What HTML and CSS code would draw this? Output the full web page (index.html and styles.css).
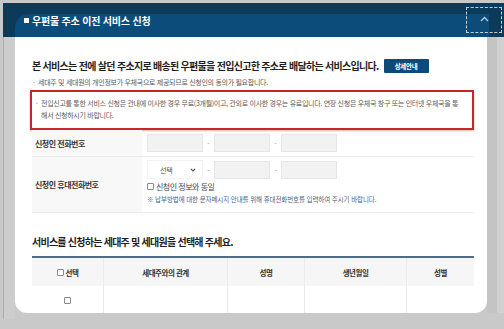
FILE: index.html
```html
<!DOCTYPE html>
<html lang="ko">
<head>
<meta charset="UTF-8">
<title>우편물 주소 이전 서비스 신청</title>
<link rel="stylesheet" href="styles.css">
</head>
<body>
	<header class="topbar">
		<div class="panel">
			<h1 class="title"><span class="sq"></span>우편물 주소 이전 서비스 신청</h1>
		</div>
		<button class="toggle" type="button">
			<svg width="9" height="6" viewBox="0 0 9 6"><path d="M1 5 L4.5 1.5 L8 5" fill="none" stroke="#b9c9d8" stroke-width="1.3"/></svg>
		</button>
	</header>

	<div class="main">
		<div class="rail"></div>
		<div class="card">
			<div class="intro">
				<h2 class="lead">본 서비스는 전에 살던 주소지로 배송된 우편물을 전입신고한 주소로 배달하는 서비스입니다.</h2>
				<a class="btn" href="#">상세안내</a>
			</div>
			<ul class="notes">
				<li>세대주 및 세대원의 개인정보가 우체국으로 제공되므로 신청인의 동의가 필요합니다.</li>
			</ul>
			<ul class="notes warn">
				<li>전입신고를 통한 서비스 신청은 관내에 이사한 경우 무료(3개월)이고, 관외로 이사한 경우는 유료입니다. 연장 신청은 우체국 창구 또는 인터넷 우체국을 통해서 신청하시기 바랍니다.</li>
			</ul>

			<div class="form">
				<div class="row">
					<div class="label">신청인 전화번호</div>
					<div class="value">
						<div class="phone">
							<span class="field"></span><span class="dash">-</span>
							<span class="field"></span><span class="dash">-</span>
							<span class="field"></span>
						</div>
					</div>
				</div>
				<div class="row tall">
					<div class="label">신청인 휴대전화번호</div>
					<div class="value">
						<div class="phone">
							<span class="select">선택<svg width="6" height="4" viewBox="0 0 6 4"><path d="M0.8 0.8 L3 3 L5.2 0.8" fill="none" stroke="#555" stroke-width="1.1"/></svg></span><span class="dash">-</span>
							<span class="field"></span><span class="dash">-</span>
							<span class="field"></span>
						</div>
						<label class="check"><span class="box"></span>신청인 정보와 동일</label>
						<p class="hint">※ 납부방법에 대한 문자메시지 안내를 위해 휴대전화번호를 입력하여 주시기 바랍니다.</p>
					</div>
				</div>
			</div>

			<h3 class="sub">서비스를 신청하는 세대주 및 세대원을 선택해 주세요.</h3>
			<div class="members">
				<div class="th"><span class="box"></span>선택</div>
				<div class="th">세대주와의 관계</div>
				<div class="th">성명</div>
				<div class="th">생년월일</div>
				<div class="th">성별</div>
				<div class="td"><span class="box"></span></div>
				<div class="td"></div>
				<div class="td"></div>
				<div class="td"></div>
				<div class="td"></div>
			</div>
		</div>
		<div class="side"></div>
	</div>
</body>
</html>
```

FILE: styles.css
```css
* { padding: 0; margin: 0; box-sizing: border-box; }
li { list-style: none; }

body { background: #c9c9c9; font-family: "Noto Sans CJK KR", "Noto Sans", sans-serif; color: #222; width: 504px; height: 329px; overflow: hidden; }

/* 상단 타이틀 */
.topbar { position: relative; height: 37px; margin-left: 3px; border-top: 3px solid #c9c9c9; background: #0c3a5b; padding: 11px 15px 0 12px; }
.panel { height: 23px; background: #0b4c7b; border-top-left-radius: 14px; padding: 1px 0 0 9px; }
.title { display: flex; align-items: center; gap: 3px; font-size: 10px; line-height: 11px; color: #fff; font-weight: bold; letter-spacing: -0.2px; }
.sq { width: 5px; height: 5px; background: #fff; }
.toggle { position: absolute; left: 463px; top: 4px; width: 36px; height: 26px; background: transparent; border: 1px dashed rgba(255,255,255,0.75); display: flex; align-items: center; justify-content: center; padding-bottom: 2px; }

.main { display: flex; margin-left: 3px; }
.rail { width: 12px; height: 282px; border-left: 1px solid #adadad; background: #cdcdcd; }
.card { width: 472px; height: 276px; background: #fff; border-radius: 0 0 12px 12px; overflow: hidden; padding: 0 13px 0 17px; }
.side { width: 17px; height: 276px; border-left: 10px solid #c4c4c4; background: #d0d0d0; }

/* 안내 */
.intro { display: flex; align-items: center; gap: 5px; margin-top: 22px; height: 14px; }
.lead { font-size: 10px; letter-spacing: -0.7px; line-height: 14px; font-weight: bold; color: #1e1e1e; }
.btn { display: block; width: 45px; height: 14px; background: #0c4a7a; border-radius: 1px; color: #fff; font-size: 6.5px; font-weight: bold; text-decoration: none; text-align: center; line-height: 14px; letter-spacing: -0.3px; }

.notes { margin-top: 3px; font-size: 7px; letter-spacing: -0.3px; line-height: 12px; color: #5a5a5a; word-break: break-all; }
.notes li { padding-left: 6px; position: relative; }
.notes li:before { content: "·"; position: absolute; left: 1px; top: 0; color: #888; }
.warn { margin: 2px 0 0 -2px; width: 444px; height: 40px; border: 2px solid #c8262d; padding: 5px 8px 0 3px; box-shadow: 0 1px 2px rgba(120,0,0,0.3); }

/* 신청인 정보 */
.form { width: 442px; }
.row { display: grid; grid-template-columns: 110px 1fr; height: 27px; border-bottom: 1px solid #ececec; }
.row.tall { height: 56px; }
.label { background: #f8f8f8; padding-left: 3px; display: flex; align-items: center; font-size: 8px; font-weight: bold; letter-spacing: -0.5px; color: #333; }
.value { padding: 4px 0 0 5px; }
.tall .value { padding-top: 3px; }
.phone { display: flex; align-items: center; gap: 4px; }
.field { width: 56px; height: 18px; background: #f2f2f2; border: 1px solid #e6e6e6; }
.dash { width: 3px; font-size: 7px; color: #999; text-align: center; }
.select { width: 56px; height: 19px; display: flex; align-items: center; justify-content: space-between; padding: 0 6px 0 12px; font-size: 7px; color: #555; letter-spacing: -0.3px; border: 1px solid #f2f2f2; }
.check { display: flex; align-items: center; gap: 2px; margin-top: 2px; font-size: 8px; letter-spacing: -0.5px; color: #444; line-height: 11px; }
.box { width: 7px; height: 7px; border: 1px solid #8a8a8a; border-radius: 1px; background: #fff; }
.hint { margin-top: 2px; font-size: 6.5px; letter-spacing: -0.1px; color: #4f6079; line-height: 10px; }

/* 세대원 선택 */
.sub { margin-top: 22px; font-size: 10px; letter-spacing: -0.75px; line-height: 14px; font-weight: bold; color: #1e1e1e; }
.members { margin-top: 7px; width: 442px; display: grid; grid-template-columns: 71px 124px 77px 102px 68px; border-top: 2px solid #4f6d88; }
.th, .td { display: flex; align-items: center; justify-content: center; gap: 2px; border-left: 1px solid #ebebeb; }
.th:nth-child(5n+1), .td:nth-child(5n+1) { border-left: 0; }
.th { height: 28px; background: #f6f6f6; font-size: 7.5px; font-weight: bold; letter-spacing: -0.5px; color: #333; }
.td { height: 30px; border-bottom: 1px solid #ececec; }
```
